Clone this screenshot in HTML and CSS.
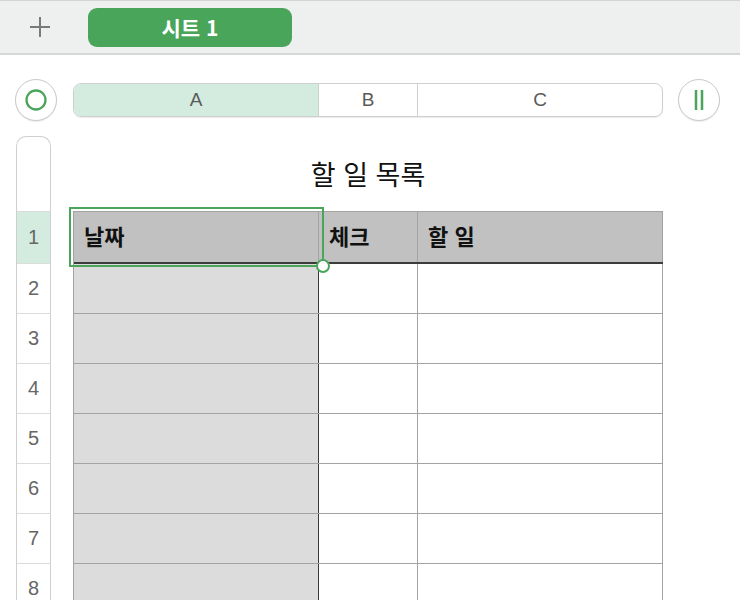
FILE: index.html
```html
<!DOCTYPE html>
<html lang="ko">
<head>
<meta charset="utf-8">
<link rel="stylesheet" href="styles.css">
</head>
<body>
<div class="tabbar">
  <div class="plus">
    <svg width="22" height="22" viewBox="0 0 22 22"><path d="M11 1V21M1 11H21" stroke="#7a7a7a" stroke-width="2" fill="none"/></svg>
  </div>
  <div class="tab">시트 1</div>
</div>
<div class="toolbar">
  <div class="roundbtn">
    <svg width="24" height="24" viewBox="0 0 24 24"><circle cx="12" cy="12" r="9.5" stroke="#4aa55b" stroke-width="2.3" fill="none"/></svg>
  </div>
  <div class="colheads">
    <div class="ch ch-a">A</div>
    <div class="ch ch-b">B</div>
    <div class="ch ch-c">C</div>
  </div>
  <div class="roundbtn">
    <svg width="24" height="24" viewBox="0 0 24 24"><path d="M9 2V22M15 2V22" stroke="#4aa55b" stroke-width="2.5" fill="none"/></svg>
  </div>
</div>
<div class="main">
  <div class="rowheads">
    <div class="rh-top"></div>
    <div class="rh rh-sel">1</div>
    <div class="rh">2</div>
    <div class="rh">3</div>
    <div class="rh">4</div>
    <div class="rh">5</div>
    <div class="rh">6</div>
    <div class="rh">7</div>
    <div class="rh">8</div>
  </div>
  <div class="sheet">
    <div class="title">할 일 목록</div>
    <div class="table">
      <div class="row head">
        <div class="cell a">날짜</div>
        <div class="cell b">체크</div>
        <div class="cell c">할 일</div>
      </div>
      <div class="row"><div class="cell a"></div><div class="cell b"></div><div class="cell c"></div></div>
      <div class="row"><div class="cell a"></div><div class="cell b"></div><div class="cell c"></div></div>
      <div class="row"><div class="cell a"></div><div class="cell b"></div><div class="cell c"></div></div>
      <div class="row"><div class="cell a"></div><div class="cell b"></div><div class="cell c"></div></div>
      <div class="row"><div class="cell a"></div><div class="cell b"></div><div class="cell c"></div></div>
      <div class="row"><div class="cell a"></div><div class="cell b"></div><div class="cell c"></div></div>
      <div class="row"><div class="cell a"></div><div class="cell b"></div><div class="cell c"></div></div>
      <div class="selection"><span class="handle"></span></div>
    </div>
  </div>
</div>
</body>
</html>
```
FILE: styles.css
```css
html, body {
  margin: 0;
  padding: 0;
  background: #ffffff;
  overflow: hidden;
  width: 740px;
  height: 600px;
}
body {
  font-family: "Noto Sans CJK KR", "Liberation Sans", sans-serif;
}
.tabbar {
  background: #eef0ef;
  border-top: 1px solid #d3d5d4;
  border-bottom: 2px solid #d6d8d7;
  display: flex;
  align-items: flex-start;
  padding-top: 7px;
  height: 45px;
}
.plus {
  width: 22px;
  height: 22px;
  margin-left: 29px;
  margin-top: 8px;
}
.plus svg { display: block; }
.tab {
  margin-left: 37px;
  width: 204px;
  height: 39px;
  background: #48a55a;
  border-radius: 9px;
  color: #ffffff;
  font-weight: 700;
  font-size: 21px;
  display: flex;
  align-items: center;
  justify-content: center;
  line-height: 1;
}
.toolbar {
  display: flex;
  align-items: center;
  padding: 24px 0 0 15px;
  height: 42px;
}
.roundbtn {
  width: 42px;
  height: 42px;
  border-radius: 50%;
  border: 1.5px solid #c9c9c9;
  box-sizing: border-box;
  display: flex;
  align-items: center;
  justify-content: center;
  background: #fff;
  box-shadow: 0 1px 1px rgba(0,0,0,0.08);
}
.roundbtn svg { display: block; }
.colheads {
  margin: 0 15px 0 16px;
  width: 590px;
  height: 34px;
  display: flex;
  border: 1px solid #cfcfcf;
  border-radius: 8px;
  box-sizing: border-box;
  overflow: hidden;
  box-shadow: 0 1px 1px rgba(0,0,0,0.08);
}
.ch {
  display: flex;
  align-items: center;
  justify-content: center;
  font-family: "Liberation Sans", "Noto Sans CJK KR", sans-serif;
  font-size: 19px;
  color: #5a5a5a;
}
.ch-a { width: 244px; background: #d4ece0; border-right: 1px solid #cfcfcf; }
.ch-b { width: 98px; border-right: 1px solid #cfcfcf; }
.ch-c { flex: 1; }
.main {
  display: flex;
  padding: 15px 0 0 16px;
}
.rowheads {
  width: 35px;
  display: flex;
  flex-direction: column;
  border: 1px solid #cfcfcf;
  border-bottom: none;
  border-radius: 10px 10px 0 0;
  box-sizing: border-box;
  overflow: hidden;
}
.rh-top {
  height: 74px;
  flex-shrink: 0;
}
.rh {
  height: 50px;
  box-sizing: border-box;
  border-top: 1px solid #dcdcdc;
  display: flex;
  align-items: center;
  justify-content: center;
  font-family: "Liberation Sans", "Noto Sans CJK KR", sans-serif;
  font-size: 20px;
  color: #666666;
  flex-shrink: 0;
}
.rh-sel {
  height: 52px;
  background: #d4ece0;
}
.sheet {
  margin-left: 22px;
  width: 590px;
}
.title {
  height: 75px;
  display: flex;
  align-items: center;
  justify-content: center;
  font-size: 27px;
  color: #111;
  font-weight: 400;
}
.table {
  position: relative;
  border-left: 1px solid #a3a3a3;
}
.row {
  display: flex;
  height: 49px;
  border-bottom: 1px solid #a3a3a3;
}
.row.head {
  height: 50px;
  border-top: 1px solid #a3a3a3;
  border-bottom: 2px solid #3c3c3c;
  background: #c0c1c0;
}
.cell {
  box-sizing: border-box;
  display: flex;
  align-items: center;
  padding-left: 10px;
  font-weight: 700;
  font-size: 22px;
  color: #111;
  padding-bottom: 4px;
}
.cell.a { width: 245px; background: #dcdcdc; border-right: 1px solid #3a3a3a; }
.cell.b { width: 99px; border-right: 1px solid #a3a3a3; }
.cell.c { width: 245px; border-right: 1px solid #a3a3a3; }
.row.head .cell { background: transparent; }
.row.head .cell.a { border-right: 1px solid #a3a3a3; }
.selection {
  position: absolute;
  left: -5px;
  top: -4px;
  width: 255px;
  height: 60px;
  border: 2px solid #4aa55b;
  box-sizing: border-box;
  pointer-events: none;
}
.handle {
  position: absolute;
  right: -8px;
  bottom: -8px;
  width: 10px;
  height: 10px;
  border: 2px solid #4aa55b;
  border-radius: 50%;
  background: #fff;
}
```
